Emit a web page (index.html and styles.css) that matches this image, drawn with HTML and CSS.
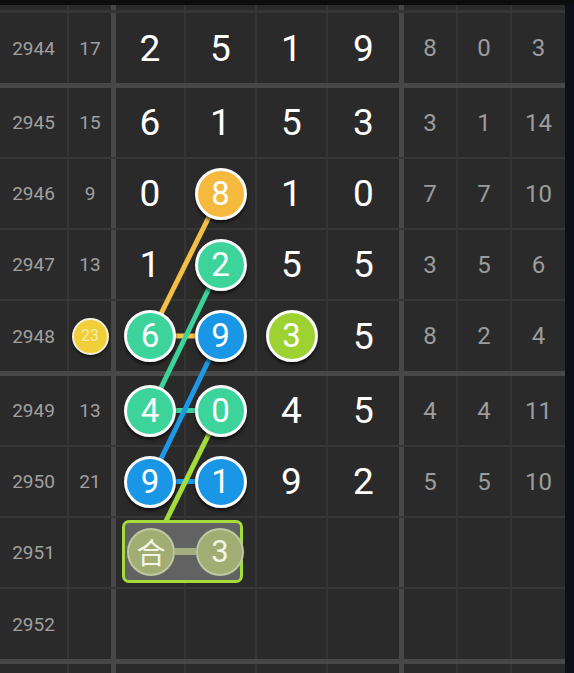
FILE: index.html
```html
<!DOCTYPE html>
<html>
<head>
<meta charset="utf-8">
<link rel="stylesheet" href="styles.css">
</head>
<body>
<div class="screen">
  <div class="topbar"></div>
  <div class="main">
    <div class="grid">
      <div class="row edge-top">
        <div class="c c1"></div><div class="c c2"></div><div class="c c3"></div><div class="c c4"></div><div class="c c5"></div><div class="c c6"></div><div class="c c7"></div><div class="c c8"></div><div class="c c9"></div>
      </div>
      <div class="row thick">
        <div class="c c1 issue">2944</div><div class="c c2 issue">17</div>
        <div class="c c3 big">2</div><div class="c c4 big">5</div><div class="c c5 big">1</div><div class="c c6 big">9</div>
        <div class="c c7 sub">8</div><div class="c c8 sub">0</div><div class="c c9 sub">3</div>
      </div>
      <div class="row">
        <div class="c c1 issue">2945</div><div class="c c2 issue">15</div>
        <div class="c c3 big">6</div><div class="c c4 big">1</div><div class="c c5 big">5</div><div class="c c6 big">3</div>
        <div class="c c7 sub">3</div><div class="c c8 sub">1</div><div class="c c9 sub">14</div>
      </div>
      <div class="row">
        <div class="c c1 issue">2946</div><div class="c c2 issue">9</div>
        <div class="c c3 big">0</div><div class="c c4"><span class="ball orange">8</span></div><div class="c c5 big">1</div><div class="c c6 big">0</div>
        <div class="c c7 sub">7</div><div class="c c8 sub">7</div><div class="c c9 sub">10</div>
      </div>
      <div class="row">
        <div class="c c1 issue">2947</div><div class="c c2 issue">13</div>
        <div class="c c3 big">1</div><div class="c c4"><span class="ball green">2</span></div><div class="c c5 big">5</div><div class="c c6 big">5</div>
        <div class="c c7 sub">3</div><div class="c c8 sub">5</div><div class="c c9 sub">6</div>
      </div>
      <div class="row thick">
        <div class="c c1 issue">2948</div><div class="c c2"><span class="mini">23</span></div>
        <div class="c c3"><span class="ball green">6</span></div><div class="c c4"><span class="ball blue">9</span></div><div class="c c5"><span class="ball lime">3</span></div><div class="c c6 big">5</div>
        <div class="c c7 sub">8</div><div class="c c8 sub">2</div><div class="c c9 sub">4</div>
      </div>
      <div class="row">
        <div class="c c1 issue">2949</div><div class="c c2 issue">13</div>
        <div class="c c3"><span class="ball green">4</span></div><div class="c c4"><span class="ball green">0</span></div><div class="c c5 big">4</div><div class="c c6 big">5</div>
        <div class="c c7 sub">4</div><div class="c c8 sub">4</div><div class="c c9 sub">11</div>
      </div>
      <div class="row">
        <div class="c c1 issue">2950</div><div class="c c2 issue">21</div>
        <div class="c c3"><span class="ball blue">9</span></div><div class="c c4"><span class="ball blue">1</span></div><div class="c c5 big">9</div><div class="c c6 big">2</div>
        <div class="c c7 sub">5</div><div class="c c8 sub">5</div><div class="c c9 sub">10</div>
      </div>
      <div class="row">
        <div class="c c1 issue">2951</div><div class="c c2"></div>
        <div class="c c3"></div><div class="c c4"></div><div class="c c5"></div><div class="c c6"></div>
        <div class="c c7"></div><div class="c c8"></div><div class="c c9"></div>
        <div class="combo">
          <span class="gball han">合</span>
          <span class="bar"></span>
          <span class="gball">3</span>
        </div>
      </div>
      <div class="row thick">
        <div class="c c1 issue">2952</div><div class="c c2"></div>
        <div class="c c3"></div><div class="c c4"></div><div class="c c5"></div><div class="c c6"></div>
        <div class="c c7"></div><div class="c c8"></div><div class="c c9"></div>
      </div>
      <div class="row edge-bottom">
        <div class="c c1"></div><div class="c c2"></div><div class="c c3"></div><div class="c c4"></div><div class="c c5"></div><div class="c c6"></div><div class="c c7"></div><div class="c c8"></div><div class="c c9"></div>
      </div>
    </div>
    <div class="edge"></div>
  </div>
  <svg class="links" width="574" height="673" viewBox="0 0 574 673">
    <g stroke-width="5" stroke-linecap="butt" fill="none">
      <line x1="220.5" y1="193.5" x2="150" y2="336" stroke="#f3bf45"/>
      <line x1="150" y1="336" x2="220.5" y2="336" stroke="#f3bf45"/>
      <line x1="220.5" y1="264.5" x2="150" y2="410.5" stroke="#3ad39a"/>
      <line x1="150" y1="410.5" x2="220.5" y2="410.5" stroke="#3ad39a"/>
      <line x1="220.5" y1="336" x2="150" y2="481.5" stroke="#1d98e6"/>
      <line x1="150" y1="481.5" x2="220.5" y2="481.5" stroke="#1d98e6"/>
      <line x1="220.5" y1="410.5" x2="163" y2="527" stroke="#a4dc3a"/>
    </g>
  </svg>
</div>
</body>
</html>
```

FILE: styles.css
```css
html, body {
  margin: 0;
  padding: 0;
  background: #0c0c0c;
}

.screen {
  position: relative;
  width: 574px;
  height: 673px;
  overflow: hidden;
  font-family: Roboto, "Noto Sans", "Noto Sans CJK SC", sans-serif;
}

.topbar {
  height: 5px;
  background: #0d0d0d;
}

.main {
  display: flex;
  height: 668px;
}

.grid {
  width: 565px;
  background: #2a2a2a;
  display: flex;
  flex-direction: column;
}

.edge {
  width: 9px;
  background: #0c1119;
}

.row {
  position: relative;
  display: grid;
  grid-template-columns: 69px 47px 70px 71px 71px 76px 54px 54px 53px;
  height: 71px;
  box-sizing: border-box;
  border-bottom: 2px solid #373737;
  flex-shrink: 0;
}

.row.thick {
  height: 75px;
  border-bottom: 5px solid #474747;
}

.row.edge-top {
  height: 8px;
  border-bottom: 3px solid #363636;
}

.row.edge-bottom {
  height: 9px;
  border-bottom: none;
}

.c {
  box-sizing: border-box;
  border-right: 2px solid #353535;
  display: flex;
  align-items: center;
  justify-content: center;
  line-height: 1;
}

.c2, .c6 {
  border-right: 5px solid #474747;
}

.c9 {
  border-right: none;
}

.issue {
  font-size: 19px;
  color: #a0a0a0;
}

.big {
  font-size: 37px;
  color: #ffffff;
}

.sub {
  font-size: 24px;
  color: #9c9c9c;
}

.ball {
  position: relative;
  z-index: 2;
  width: 52px;
  height: 52px;
  box-sizing: border-box;
  border-radius: 50%;
  border: 3px solid #fbfbfb;
  box-shadow: 0 3px 3px rgba(0, 0, 0, 0.55);
  display: flex;
  align-items: center;
  justify-content: center;
  font-size: 33px;
  color: #ffffff;
  padding-bottom: 1px;
}

.orange { background: #f5b93d; }
.green  { background: #3dd49b; }
.blue   { background: #1996e6; }
.lime   { background: #9ed233; }

.mini {
  position: relative;
  z-index: 2;
  width: 37px;
  height: 37px;
  box-sizing: border-box;
  border-radius: 50%;
  border: 2px solid #f3f1de;
  background: #f1cf3b;
  box-shadow: 0 2px 3px rgba(0, 0, 0, 0.5);
  display: flex;
  align-items: center;
  justify-content: center;
  font-size: 16px;
  color: #f8e9a6;
}

.combo {
  position: absolute;
  left: 122px;
  top: 2px;
  width: 121px;
  height: 63px;
  box-sizing: border-box;
  border: 3px solid #a3dc3b;
  border-radius: 7px;
  background: #626262;
  display: flex;
  align-items: center;
  padding-left: 2px;
  z-index: 2;
}

.gball {
  flex-shrink: 0;
  width: 48px;
  height: 48px;
  box-sizing: border-box;
  border-radius: 50%;
  border: 2px solid rgba(215, 222, 200, 0.55);
  background: #a2ad73;
  display: flex;
  align-items: center;
  justify-content: center;
  font-size: 31px;
  color: #f2f5e6;
  line-height: 1;
}

.gball.han {
  font-size: 29px;
  font-family: "Noto Sans CJK SC", sans-serif;
}

.bar {
  flex-shrink: 0;
  width: 21px;
  height: 7px;
  background: #a5ae80;
}

.links {
  position: absolute;
  left: 0;
  top: 0;
  z-index: 1;
  pointer-events: none;
}
```
